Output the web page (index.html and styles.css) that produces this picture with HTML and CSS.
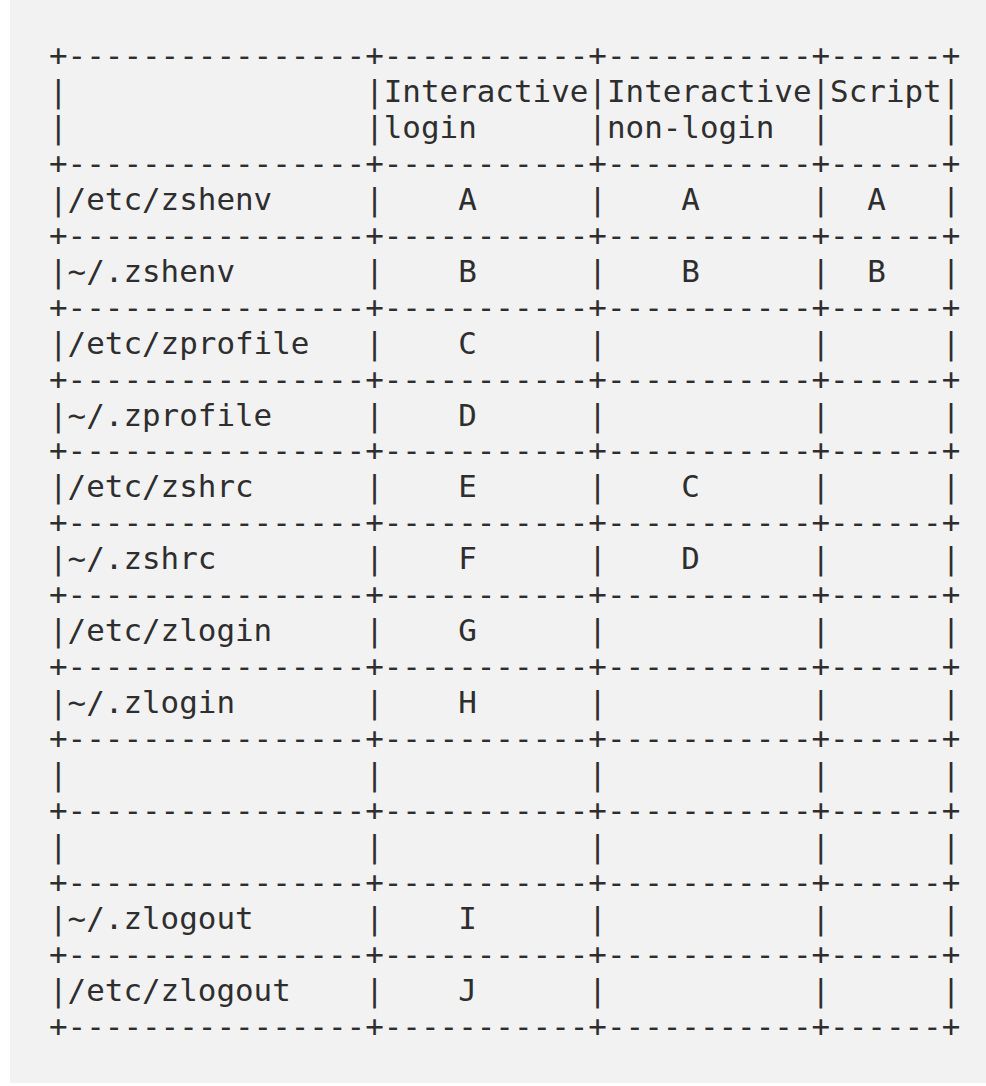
FILE: index.html
```html
<!DOCTYPE html>
<html lang="en">
<head>
<meta charset="utf-8">
<title>zsh startup files</title>
<link rel="stylesheet" href="styles.css">
</head>
<body>
<div class="panel"><pre class="table">+----------------+-----------+-----------+------+
|                |Interactive|Interactive|Script|
|                |login      |non-login  |      |
+----------------+-----------+-----------+------+
|/etc/zshenv     |    A      |    A      |  A   |
+----------------+-----------+-----------+------+
|~/.zshenv       |    B      |    B      |  B   |
+----------------+-----------+-----------+------+
|/etc/zprofile   |    C      |           |      |
+----------------+-----------+-----------+------+
|~/.zprofile     |    D      |           |      |
+----------------+-----------+-----------+------+
|/etc/zshrc      |    E      |    C      |      |
+----------------+-----------+-----------+------+
|~/.zshrc        |    F      |    D      |      |
+----------------+-----------+-----------+------+
|/etc/zlogin     |    G      |           |      |
+----------------+-----------+-----------+------+
|~/.zlogin       |    H      |           |      |
+----------------+-----------+-----------+------+
|                |           |           |      |
+----------------+-----------+-----------+------+
|                |           |           |      |
+----------------+-----------+-----------+------+
|~/.zlogout      |    I      |           |      |
+----------------+-----------+-----------+------+
|/etc/zlogout    |    J      |           |      |
+----------------+-----------+-----------+------+</pre></div>
</body>
</html>
```

FILE: styles.css
```css
html, body {
  margin: 0;
  padding: 0;
  background: #ffffff;
}

.panel {
  margin-left: 10px;
  width: 976px;
  height: 1083px;
  box-sizing: border-box;
  background: #f2f2f2;
  padding: 38px 0 0 39px;
}

.table {
  margin: 0;
  font-family: "DejaVu Sans Mono", monospace;
  font-size: 30.9px;
  line-height: 35.95px;
  color: #2e2e2e;
}
```
